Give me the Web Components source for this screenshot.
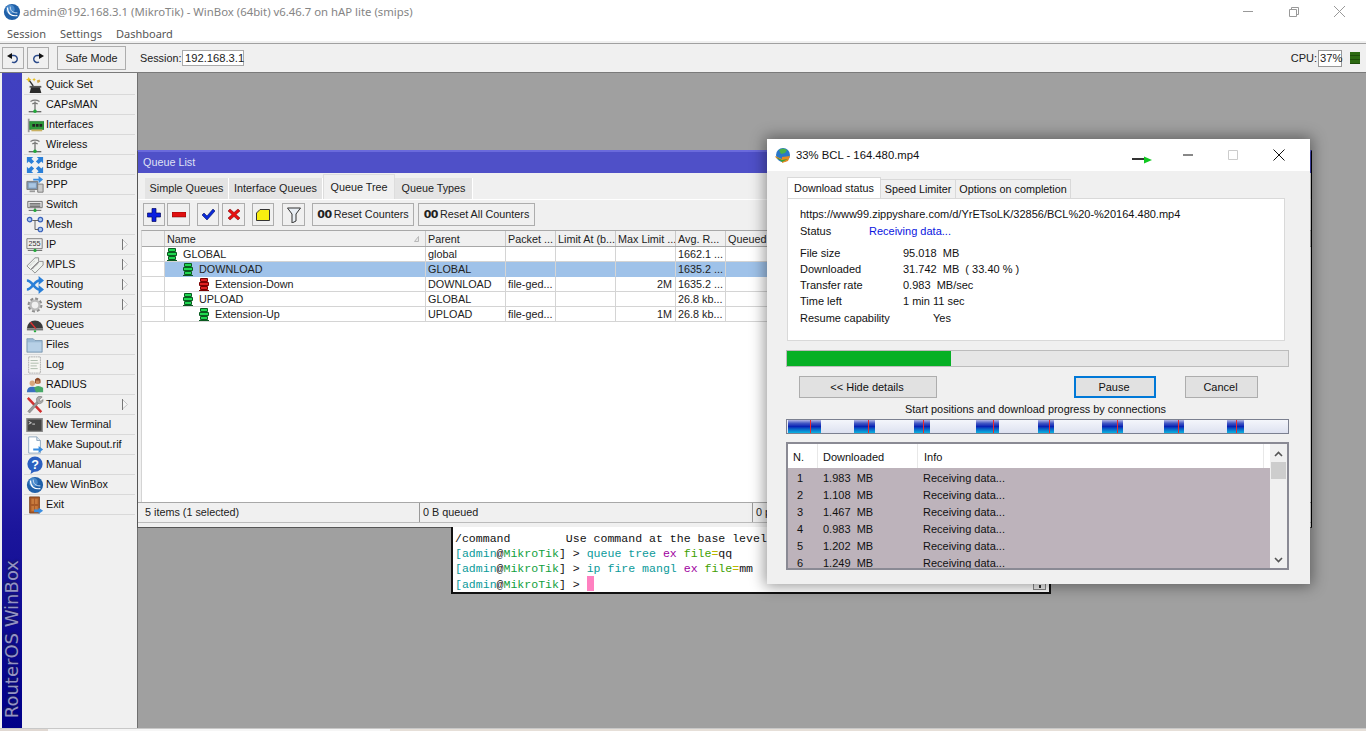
<!DOCTYPE html>
<html>
<head>
<meta charset="utf-8">
<title>WinBox</title>
<style>
    html, body { margin: 0; padding: 0; }
    body {
        width: 1366px;
        height: 731px;
        overflow: hidden;
        display: flex;
        flex-direction: column;
        background: #fff;
        color: #111;
        font: 10.8px/15px "Liberation Sans", Arial, sans-serif;
    }
</style>
</head>
<body>
<wb-titlebar></wb-titlebar>
<wb-menubar></wb-menubar>
<wb-toolbar></wb-toolbar>
<wb-workspace>
    <wb-sidebar></wb-sidebar>
    <wb-desktop>
        <wb-queue-window></wb-queue-window>
        <wb-terminal></wb-terminal>
        <idm-window></idm-window>
    </wb-desktop>
</wb-workspace>
<wb-taskstrip></wb-taskstrip>

<script>
// little base class: every element clones its markup from a template
class Shadowed extends HTMLElement {
    constructor() {
        super();
        this.root = this.attachShadow({mode: "open"});
        const tpl = document.createElement("template");
        tpl.innerHTML = "<style>" + this.constructor.css + "</style>" + this.constructor.html;
        this.root.appendChild(tpl.content.cloneNode(true));
    }
}
Shadowed.css = ":host{display:block}";
Shadowed.html = "<slot></slot>";

const svg = (w, h, body, box) =>
    `<svg width="${w}" height="${h}" viewBox="${box || `0 0 ${w} ${h}`}" style="display:block;flex:none">${body}</svg>`;

const ICONS = {
    quick: `<path d="M6 11h9l2 8H4z" fill="#2b2b2b"/><path d="M4 11h13v2H4z" fill="#555"/><path d="M8 11L3 4" stroke="#333" stroke-width="1.6"/><path d="M3 1l1 2 2 1-2 1-1 2-1-2-2-1 2-1zM9 2l.7 1.4L11 4l-1.3.6L9 6l-.7-1.4L7 4l1.3-.6z" fill="#e8c020"/><path d="M12 5l3-1 1 2-3 2z" fill="#c9a24a"/>`,
    antenna: `<path d="M5 6q5-3 10 0M7 9q3-2 6 0" fill="none" stroke="#777" stroke-width="1.3"/><path d="M10 6v10" stroke="#777" stroke-width="1.5"/><path d="M3 17.5h14" stroke="#444" stroke-width="1.2"/><circle cx="10" cy="17" r="2" fill="#22a83a"/>`,
    iface: `<path d="M2 3h2v15H2z" fill="#999"/><path d="M4 6h16v9H4z" fill="#2f9a3c" stroke="#1c6a28" stroke-width=".6"/><path d="M7 9h3v3H7zM11 9h3v3h-3zM15 9h3v3h-3z" fill="#222"/><path d="M6 15h12v2H6z" fill="#c9b060"/>`,
    bridge: `<g fill="#2a7fd8"><path d="M1 1h7L6 3l3 3-3 3-3-3-2 2zM19 1v7l-2-2-3 3-3-3 3-3-2-2zM1 19v-7l2 2 3-3 3 3-3 3 2 2zM19 19h-7l2-2-3-3 3-3 3 3 2-2z"/></g>`,
    ppp: `<path d="M1 6h12v9H1z" fill="#7d97b4" stroke="#777"/><path d="M3 8h8v5H3z" fill="#a9c6e3"/><path d="M4 16h6v2H4z" fill="#999"/><path d="M13 9h6v9h-6z" fill="#ccc" stroke="#777"/><path d="M8 3h6V0l5 4-5 4V5H8z" fill="#3a8de0"/>`,
    swtch: `<path d="M2 6h16v7H2z" fill="#e6e6e6" stroke="#666"/><path d="M4 8h12v1.5H4zM4 10.5h12V12H4z" fill="#555"/><path d="M3 16h14" stroke="#555"/><path d="M10 13v3" stroke="#555"/><circle cx="10" cy="16" r="1.8" fill="#22a83a"/>`,
    mesh: `<g fill="#a8c8f0" stroke="#3a60b8" stroke-width="1.3"><circle cx="4" cy="4" r="2.5"/><circle cx="16" cy="4" r="2.5"/><circle cx="16" cy="15" r="2.5"/></g><path d="M7 5h7M10 5v10h4" fill="none" stroke="#555"/>`,
    ip: `<path d="M1 3h17v11H1z" fill="#eee" stroke="#777"/><text x="9.5" y="11.5" text-anchor="middle" font-family="Liberation Sans" font-size="8" fill="#333">255</text><path d="M2 16h16" stroke="#555"/><circle cx="10" cy="16" r="1.8" fill="#22a83a"/>`,
    mpls: `<g fill="#eef2ee" stroke="#888"><path d="M1 11l9-9h4v4l-9 9z"/><path d="M6 15l9-9h4v4l-9 9z"/></g><path d="M4 11l6-6M8 14l6-6" stroke="#aaa" stroke-dasharray="1 1"/>`,
    routing: `<g fill="none" stroke="#2a7fd8" stroke-width="3"><path d="M1 5c6 0 8 10 14 10"/><path d="M1 15c6 0 8-10 14-10"/></g><path d="M14 0l6 5-6 5zM14 10l6 5-6 5z" fill="#2a7fd8"/>`,
    system: `<circle cx="10" cy="10" r="6.5" fill="none" stroke="#8e8e8e" stroke-width="3.5" stroke-dasharray="3 2"/><circle cx="10" cy="10" r="5" fill="none" stroke="#bbb" stroke-width="2.5"/>`,
    queues: `<path d="M1 14a9 9 0 0 1 18 0z" fill="#3a3a3a"/><path d="M1 14h18v2H1z" fill="#777"/><path d="M5 7l6 7" stroke="#e03030" stroke-width="1.5"/><path d="M10 16v2" stroke="#22a83a" stroke-width="2.5"/>`,
    files: `<path d="M1 5V3h7l2 2h8v13H1z" fill="#9cbad4" stroke="#6f8ea8" stroke-width=".8"/><path d="M2 7h15v10H2z" fill="#b7d0e6"/>`,
    log: `<path d="M3 1h13v18H3z" fill="#f6f6f2" stroke="#aaa" stroke-dasharray="2 .6"/><path d="M5 5h8M5 8h9M5 11h7M5 14h8" stroke="#a8b8a8"/>`,
    radius: `<circle cx="7" cy="8" r="3" fill="#d9a77e"/><path d="M1 18q0-6 6-6t6 6z" fill="#3a70c0"/><circle cx="13" cy="6" r="3" fill="#c8885a"/><path d="M10 4q3-4 6 0v4h-1V5h-4v3h-1z" fill="#8a4a28"/><path d="M9 13q4-4 10 0v5H11z" fill="#48a868"/>`,
    tools: `<path d="M3 1l15 16-2 2L1 3z" fill="#d03030"/><path d="M2 17L13 5l2 2L4 19z" fill="#999" stroke="#666" stroke-width=".5"/><path d="M12 6a4 4 0 0 1 6-5l-3 3 1 2 3-2a4 4 0 0 1-6 4z" fill="#aaa" stroke="#666" stroke-width=".5"/>`,
    terminal: `<path d="M1 3h17v14H1z" fill="#444" stroke="#888" stroke-width="1.5"/><path d="M3 6l3 1.5L3 9" fill="none" stroke="#ddd"/><path d="M7 9h3" stroke="#ddd"/>`,
    supout: `<path d="M3 1h9l4 4v14H3z" fill="#fff" stroke="#8aa4bc"/><path d="M12 1v4h4" fill="#dce6f0" stroke="#8aa4bc"/><path d="M8 14h6v-3l5 4-5 4v-3H8z" fill="#3a8de0"/>`,
    manual: `<circle cx="10" cy="9" r="8.5" fill="#2b5fc0"/><path d="M6 16l-1 4 5-3z" fill="#2b5fc0"/><text x="10" y="14" text-anchor="middle" font-family="Liberation Sans" font-weight="bold" font-size="14" fill="#fff">?</text>`,
    winbox: `<circle cx="10" cy="10" r="9" fill="#2060a8"/><circle cx="8" cy="7" r="5" fill="#5a9ad8" opacity=".7"/><path d="M5 5c0 7 4 10 11 9" fill="none" stroke="#fff" stroke-width="1.3"/><path d="M8 4c0 5 3 7 8 7" fill="none" stroke="#dbe8f6"/>`,
    exit: `<path d="M4 1h11v18H4z" fill="#a85a28" stroke="#6e3814" stroke-width=".8"/><path d="M6 3h3v6H6zM10 3h3v6h-3zM6 11h3v6H6zM10 11h3v6h-3z" fill="#c87a3c"/><path d="M9 15h5v-2l5 3.5-5 3.5v-2H9z" fill="#3a8de0"/>`,
};

class WbTitlebar extends Shadowed {}
WbTitlebar.css = `
    :host { display: flex; align-items: center; height: 23px; flex: none; background: #fff; padding-left: 3px; }
    span { margin-left: 2px; font: 11.35px "Noto Sans", sans-serif; color: #858585; white-space: nowrap; }
    .ctl { margin-left: auto; display: flex; gap: 30px; padding-right: 18px; align-items: center; }
`;
WbTitlebar.html = svg(18, 18, ICONS.winbox, "0 0 20 20") +
    `<span>admin@192.168.3.1 (MikroTik) - WinBox (64bit) v6.46.7 on hAP lite (smips)</span>
    <div class="ctl">` +
    svg(16, 12, `<path d="M3 5.5h10" stroke="#999"/>`) +
    svg(16, 12, `<path d="M3.5 3.5h7v7h-7zM5.5 3.5v-2h7v7h-2" fill="none" stroke="#999"/>`) +
    svg(16, 12, `<path d="M2 0l11 11M13 0L2 11" stroke="#999"/>`) + `</div>`;
customElements.define("wb-titlebar", WbTitlebar);

class WbMenubar extends Shadowed {}
WbMenubar.css = `
    :host { display: flex; flex: none; height: 16px; padding: 2px 0 0 7px; background: #fff; border-bottom: 2px solid #f0f0f0; gap: 14px; align-items: center; font: 11px "Noto Sans", sans-serif; color: #555; }
`;
WbMenubar.html = `<span>Session</span><span>Settings</span><span>Dashboard</span>`;
customElements.define("wb-menubar", WbMenubar);

class WbButton extends Shadowed {}
WbButton.css = `
    :host { display: inline-flex; align-items: center; justify-content: center; gap: 2px; box-sizing: border-box; border: 1.5px solid #adadad; background: #f0f0f0; color: #222; white-space: nowrap; flex: none; }
`;
customElements.define("wb-button", WbButton);

class WbToolbar extends Shadowed {
    connectedCallback() {
        this.root.getElementById("undo").innerHTML = svg(14, 12, `<path d="M4 3.5h4a3.5 3.5 0 1 1-2 6.5" fill="none" stroke="#2a4a8a" stroke-width="1.4"/><path d="M1 4l5-3v6z" fill="#111"/>`);
        this.root.getElementById("redo").innerHTML = svg(14, 12, `<path d="M10 3.5H6a3.5 3.5 0 1 0 2 6.5" fill="none" stroke="#2a4a8a" stroke-width="1.4"/><path d="M13 4L8 1v6z" fill="#111"/>`);
    }
}
WbToolbar.css = `
    :host { display: flex; flex: none; align-items: center; height: 28px; border-top: 1px solid #a0a0a0; border-bottom: 1px solid #7a7a7a; background: #f0f0f0; padding: 0 6px 0 2px; color: #222; }
    wb-button { height: 22px; }
    #undo, #redo { width: 22px; }
    #redo { margin-left: 3px; }
    #safe { width: 69px; height: 24px; margin-left: 8px; }
    .l { margin-left: 14px; width: 42px; white-space: nowrap; }
    .field { border: 1px solid #aaa; background: #fff; height: 16px; line-height: 15px; box-sizing: border-box; padding: 0 2px; font-size: 11.2px; }
    .cpu { margin-left: auto; font-size: 11px; }
    .cpuf { margin-left: 1px; width: 24px; height: 17px; border: 1px solid #999; padding: 0 1px; }
    .led { width: 10px; height: 12px; margin-left: 8px; background: repeating-linear-gradient(#2d6a12 0 3px, #1e4d0a 3px 4px); }
`;
WbToolbar.html = `<wb-button id="undo"></wb-button><wb-button id="redo"></wb-button>
    <wb-button id="safe">Safe Mode</wb-button>
    <span class="l">Session:</span><span class="field" style="width:62px">192.168.3.1</span>
    <span class="cpu">CPU:</span><span class="field cpuf">37%</span><span class="led"></span>`;
customElements.define("wb-toolbar", WbToolbar);

class WbWorkspace extends Shadowed {}
WbWorkspace.css = `:host { display: flex; flex: 1; min-height: 0; background: #f0f0f0; }`;
customElements.define("wb-workspace", WbWorkspace);

class WbMenuItem extends Shadowed {
    connectedCallback() {
        this.root.getElementById("icon").innerHTML = svg(18, 18, ICONS[this.getAttribute("icon")], "0 0 20 20");
        if (this.hasAttribute("sub")) {
            this.root.getElementById("arrow").innerHTML = svg(6, 11, `<path d="M.5 .5l5 5-5 4.5z" fill="#f6f6f6" stroke="#c4c4c4"/><path d="M.5 0v11" stroke="#777"/>`);
        }
    }
}
WbMenuItem.css = `
    :host { display: flex; align-items: center; height: 19px; border-bottom: 1px solid #d9d9d9; color: #111; white-space: nowrap; }
    #icon { width: 20px; margin-left: 2px; flex: none; }
    #arrow { margin-left: auto; margin-right: 7px; }
`;
WbMenuItem.html = `<div id="icon"></div><slot></slot><div id="arrow"></div>`;
customElements.define("wb-menu-item", WbMenuItem);

const MENU = [
    ["quick", "Quick Set"], ["antenna", "CAPsMAN"], ["iface", "Interfaces"], ["antenna", "Wireless"],
    ["bridge", "Bridge"], ["ppp", "PPP"], ["swtch", "Switch"], ["mesh", "Mesh"], ["ip", "IP", 1],
    ["mpls", "MPLS", 1], ["routing", "Routing", 1], ["system", "System", 1], ["queues", "Queues"],
    ["files", "Files"], ["log", "Log"], ["radius", "RADIUS"], ["tools", "Tools", 1],
    ["terminal", "New Terminal"], ["supout", "Make Supout.rif"], ["manual", "Manual"],
    ["winbox", "New WinBox"], ["exit", "Exit"],
];

class WbSidebar extends Shadowed {
    connectedCallback() {
        const list = this.root.getElementById("list");
        for (const [icon, label, sub] of MENU) {
            const item = document.createElement("wb-menu-item");
            item.setAttribute("icon", icon);
            if (sub) item.setAttribute("sub", "");
            item.textContent = label;
            list.appendChild(item);
        }
    }
}
WbSidebar.css = `
    :host { display: flex; width: 137px; flex: none; padding-left: 2px; box-sizing: border-box; background: #f0f0f0; }
    #strip { width: 20px; flex: none; background: linear-gradient(#4040c0 0%, #3f36bb 45%, #1b159b 70%, #000088 100%); display: flex; align-items: flex-end; justify-content: center; padding-bottom: 10px; box-sizing: border-box; }
    #strip span { writing-mode: vertical-rl; transform: rotate(180deg); font: 18px/20px "DejaVu Sans", sans-serif; color: #9494c2; text-shadow: 1px -1px 2px #1a1a50; white-space: nowrap; }
    #list { flex: 1; padding: 2px 2px 0 2px; min-width: 0; }
`;
WbSidebar.html = `<div id="strip"><span>RouterOS WinBox</span></div><div id="list"></div>`;
customElements.define("wb-sidebar", WbSidebar);

class WbDesktop extends Shadowed {}
WbDesktop.css = `:host { display: block; position: relative; flex: 1; background: #a0a0a0; box-shadow: inset 1px 0 0 #6f6f6f; overflow: hidden; }`;
customElements.define("wb-desktop", WbDesktop);

class WbTaskstrip extends Shadowed {}
WbTaskstrip.css = `:host { display: block; flex: none; height: 3px; border-top: 1px solid #c8c8c8; box-sizing: border-box; background: linear-gradient(90deg, #e0d8d2 48px, #f6f6f6 48px 390px, #e6dfd8 390px); }`;
customElements.define("wb-taskstrip", WbTaskstrip);

/* queue list window */
class WbQueueRow extends Shadowed {
    connectedCallback() {
        const cells = (this.getAttribute("cells") || "").split("|");
        const depth = +this.getAttribute("depth");
        const color = this.getAttribute("color") === "red"
            ? ["#e02020", "#7a0000"] : ["#20d850", "#0a5a20"];
        const lamp = svg(12, 13, `<g fill="${color[0]}" stroke="${color[1]}"><path d="M2.5 .5h7v3h-7zM1.5 4.5h9v3h-9zM2.5 8.5h7v3h-7z"/></g><path d="M1 12.5h10" stroke="${color[1]}"/>`);
        let html = `<div class="c first"></div>
            <div class="c name" style="padding-left:${1 + depth * 16}px">${lamp}<span>${cells[0]}</span></div>`;
        for (let i = 1; i < cells.length; i++) {
            const right = cells[i].endsWith("M") ? " r" : "";
            html += `<div class="c${right}">${cells[i]}</div>`;
        }
        this.root.getElementById("row").innerHTML = html;
        if (this.hasAttribute("selected")) this.root.getElementById("row").classList.add("sel");
    }
}
WbQueueRow.css = `
    :host { display: block; }
    #row { display: grid; grid-template-columns: var(--cols); height: 15px; background: #fff; }
    .c { box-sizing: border-box; border-right: 1px solid #d4d4d4; border-bottom: 1px solid #d4d4d4; padding-left: 2px; line-height: 14px; white-space: nowrap; overflow: hidden; }
    .r { text-align: right; padding-right: 3px; }
    .name { display: flex; align-items: center; gap: 5px; }
    .sel .c { background: #9fc2e9; border-bottom-color: #9fc2e9; }
    .sel .first { background: #fff; border-bottom-color: #d4d4d4; }
`;
WbQueueRow.html = `<div id="row"></div>`;
customElements.define("wb-queue-row", WbQueueRow);

const ROWS = [
    ["GLOBAL|global||||1662.1 ...|", 0],
    ["DOWNLOAD|GLOBAL||||1635.2 ...|", 1, "", true],
    ["Extension-Down|DOWNLOAD|file-ged...||2M|1635.2 ...|", 2, "red"],
    ["UPLOAD|GLOBAL||||26.8 kb...|", 1],
    ["Extension-Up|UPLOAD|file-ged...||1M|26.8 kb...|", 2],
];

class WbQueueWindow extends Shadowed {
    connectedCallback() {
        const tools = this.root.getElementById("tools");
        const btns = [
            [22, svg(14, 14, `<path d="M5 .5h4V5h4.5v4H9v4.5H5V9H.5V5H5z" fill="#0a1ee0" stroke="#050a60" stroke-width=".7"/>`), 0],
            [23, svg(14, 6, `<path d="M0 0h14v5H0z" fill="#e01010" stroke="#600" stroke-width=".5"/>`), 2],
            [22, svg(14, 13, `<path d="M1 7l2-2 3 3 6-7 2 2-8 9z" fill="#0a2ad8" stroke="#051060" stroke-width=".6"/>`), 7],
            [23, svg(14, 13, `<path d="M1 3l2-2 4 3.5L11 1l2 2-4 3.5L13 10l-2 2-4-3.5L3 12l-2-2 4-3.5z" fill="#e81010" stroke="#600" stroke-width=".5"/>`), 3],
            [22, svg(14, 12, `<path d="M.5 4L4 .5h9.5v11H.5z" fill="#f8ee10" stroke="#333"/>`), 7],
            [23, svg(14, 16, `<path d="M.5 1h13L9 7v7l-4 2V7z" fill="#e8eef4" stroke="#333"/>`), 8],
        ];
        btns.forEach(([w, icon, gap]) => {
            const b = document.createElement("wb-button");
            b.style.width = w + "px";
            b.style.marginLeft = gap + "px";
            b.innerHTML = icon;
            tools.appendChild(b);
        });
        for (const [text, w, gap] of [["Reset Counters", 102, 7], ["Reset All Counters", 117, 4]]) {
            const b = document.createElement("wb-button");
            b.style.width = w + "px";
            b.style.marginLeft = gap + "px";
            b.innerHTML = `<b style="font:bold 11px 'DejaVu Sans',sans-serif;letter-spacing:-.5px">00</b>${text}`;
            tools.appendChild(b);
        }
        const rows = this.root.getElementById("rows");
        for (const [cells, depth, color, sel] of ROWS) {
            const r = document.createElement("wb-queue-row");
            r.setAttribute("cells", cells);
            r.setAttribute("depth", depth);
            if (color) r.setAttribute("color", color);
            if (sel) r.setAttribute("selected", "");
            rows.appendChild(r);
        }
    }
}
WbQueueWindow.css = `
    :host { --cols: 23px 261px 80px 50px 60px 60px 50px 60px 1fr; display: flex; position: absolute; left: 0; top: 77px; width: 1175px; height: 378px; box-sizing: border-box; flex-direction: column; background: #f0f0f0; border: 1px solid #555; border-top: 1px solid #6a6adc; border-right-color: #000; color: #222; }
    #title { height: 21px; flex: none; background: #4f50c8; color: #dfe0f4; padding-left: 5px; line-height: 20px; border-top: 1px solid #6a6adc; }
    #tabs { display: flex; align-items: flex-end; height: 26px; flex: none; padding-left: 7px; border-bottom: 1px solid #fff; }
    .tab { height: 21px; line-height: 21px; background: #e4e4e4; border-right: 1px solid #fff; box-sizing: border-box; text-align: center; white-space: nowrap; }
    .tab.on { background: #f0f0f0; height: 25px; line-height: 25px; border: 1px solid #ddd; border-bottom: 0; }
    #tools { display: flex; height: 23px; flex: none; margin-top: 3px; padding-left: 5px; }
    #table { flex: 1; margin: 4px 0 0 3px; min-height: 0; display: flex; flex-direction: column; background: #fff; border-top: 1px solid #a8a8a8; border-left: 1px solid #d4d4d4; }
    #head { display: grid; grid-template-columns: var(--cols); height: 16px; box-sizing: border-box; flex: none; background: #f0f0f0; border-bottom: 1px solid #a8a8a8; line-height: 16px; }
    #head div { border-right: 1px solid #c8c8c8; padding-left: 2px; white-space: nowrap; overflow: hidden; }
    #head .n { display: flex; align-items: center; justify-content: space-between; padding-right: 5px; }
    #status { display: flex; height: 19px; flex: none; border-top: 1px solid #a8a8a8; border-bottom: 1px solid #bbb; margin: 0 0 4px 0; line-height: 19px; padding-left: 7px; }
    #status span { border-right: 1px solid #999; box-sizing: border-box; white-space: nowrap; }
`;
WbQueueWindow.html = `
    <div id="title">Queue List</div>
    <div id="tabs">
        <div class="tab" style="width:84px">Simple Queues</div><div class="tab" style="width:94px">Interface Queues</div><div class="tab on" style="width:72px">Queue Tree</div><div class="tab" style="width:78px">Queue Types</div>
    </div>
    <div id="tools"></div>
    <div id="table">
        <div id="head"><div></div><div class="n">Name${svg(6, 6, `<path d="M.5 5.5L4.5 .5v5z" fill="#e8e8e8" stroke="#b8b8b8"/>`)}</div><div>Parent</div><div>Packet ...</div><div>Limit At (b...</div><div>Max Limit ...</div><div>Avg. R...</div><div>Queued</div><div></div></div>
        <div id="rows"></div>
        <div style="flex:1"></div>
    </div>
    <div id="status"><span style="width:275px">5 items (1 selected)</span><span style="width:333px;padding-left:3px">0 B queued</span><span style="padding-left:3px;border:0;width:20px">0 p</span></div>
`;
customElements.define("wb-queue-window", WbQueueWindow);

/* terminal */
class WbTerminal extends Shadowed {}
WbTerminal.css = `
    :host { display: block; position: absolute; left: 314px; top: 454px; width: 600px; height: 67px; box-sizing: border-box; background: #fff; border: 2px solid #111; border-top: 0; padding: 4px 0 0 2px; font: 11.56px/15px "Liberation Mono", monospace; color: #111; }
    .ln { white-space: pre; height: 15px; }
    .t { color: #0a9a9a; } .g { color: #10a040; } .p { color: #a000a0; } .f { color: #40a000; } .y { color: #b8b800; }
    .cur { display: inline-block; width: 7px; height: 15px; background: #ff80c0; vertical-align: -3px; }
    .sb { position: absolute; right: 3px; bottom: 2px; width: 13px; height: 11px; background: #f0f0f0; border: 1px solid #888; box-sizing: border-box; display: flex; align-items: flex-end; justify-content: center; }
    .sb i { width: 2px; height: 3px; background: #333; margin-bottom: 1px; }
`;
WbTerminal.html = `<div class="ln">/command        Use command at the base level</div><div class="ln"><span class="t">[admin</span>@<span class="g">MikroTik</span>] &gt; <span class="t">queue tree</span> <span class="p">ex</span> <span class="f">file</span><span class="y">=</span>qq</div><div class="ln"><span class="t">[admin</span>@<span class="g">MikroTik</span>] &gt; <span class="t">ip fire mangl</span> <span class="p">ex</span> <span class="f">file</span><span class="y">=</span>mm</div><div class="ln"><span class="t">[admin</span>@<span class="g">MikroTik</span>] &gt; <span class="cur"></span></div><div class="sb"><i></i></div>`;
customElements.define("wb-terminal", WbTerminal);

/* download manager window */
class IdmButton extends Shadowed {}
IdmButton.css = `
    :host { display: flex; align-items: center; justify-content: center; height: 22px; box-sizing: border-box; background: #e1e1e1; border: 1px solid #adadad; color: #111; padding-right: 2px; }
    :host([focused]) { border: 2px solid #0078d7; }
`;
customElements.define("idm-button", IdmButton);

// start, end, red mark of the connection segments, in px from the bar's left edge
const SEGMENTS = [[1, 34, 23], [67, 88, 81], [127, 143, 136], [189, 212, 206], [251, 267, 262], [315, 336, 330], [377, 397, 391], [440, 457, 449]];

class IdmConnBar extends Shadowed {
    connectedCallback() {
        let html = "", last = 0;
        for (const [a, b, mark] of SEGMENTS) {
            html += `<i style="margin-left:${a - last}px;width:${b - a}px"><u style="margin-left:${mark - a}px"></u></i>`;
            last = b;
        }
        this.root.getElementById("bar").innerHTML = html;
    }
}
IdmConnBar.css = `
    :host { display: block; height: 15px; box-sizing: border-box; border: 1px solid #7b8090; background: linear-gradient(#f4f6fb, #dde1f0); }
    #bar { display: flex; height: 100%; }
    i { display: block; flex: none; height: 100%; background: linear-gradient(#b4b6e6 0, #4458c4 25%, #0a22b4 50%, #0a64c8 70%, #0ab4e0 100%); }
    u { display: block; width: 1px; height: 100%; background: #f02828; }
`;
IdmConnBar.html = `<div id="bar"></div>`;
customElements.define("idm-conn-bar", IdmConnBar);

const CONNS = [["1", "1.983  MB"], ["2", "1.108  MB"], ["3", "1.467  MB"], ["4", "0.983  MB"], ["5", "1.202  MB"], ["6", "1.249  MB"]];

class IdmConnList extends Shadowed {
    connectedCallback() {
        this.root.getElementById("rows").innerHTML = CONNS.map(([n, mb]) =>
            `<div class="row"><span class="n">${n}</span><span class="d">${mb}</span><span>Receiving data...</span></div>`).join("");
    }
}
IdmConnList.css = `
    :host { display: flex; height: 128px; box-sizing: border-box; border: 2px solid #8a8a94; background: #fff; overflow: hidden; }
    #main { flex: 1; min-width: 0; display: flex; flex-direction: column; }
    #head { display: flex; height: 24px; flex: none; line-height: 26px; }
    #head span { box-sizing: border-box; border-right: 1px solid #e8e8e8; padding-left: 5px; }
    #rows { flex: 1; background: #bdb3bb; overflow: hidden; padding-top: 2px; }
    .row { display: flex; height: 17px; line-height: 17px; white-space: pre; }
    .n { width: 30px; padding-left: 9px; box-sizing: border-box; }
    .d { width: 105px; padding-left: 5px; box-sizing: border-box; }
    #sb { width: 17px; flex: none; background: #f0f0f0; display: flex; flex-direction: column; align-items: center; }
    .arrow { height: 17px; display: flex; align-items: center; justify-content: center; flex: none; }
    .thumb { width: 15px; height: 17px; background: #cdcdcd; flex: none; }
`;
IdmConnList.html = `
    <div id="main">
        <div id="head"><span style="width:30px">N.</span><span style="width:100px">Downloaded</span><span style="width:346px;padding-left:6px">Info</span></div>
        <div id="rows"></div>
    </div>
    <div id="sb">
        <div class="arrow" style="margin-top:1px">${svg(9, 6, `<path d="M1 5l3.5-3.5L8 5" fill="none" stroke="#555" stroke-width="1.6"/>`)}</div>
        <div class="thumb"></div>
        <div style="flex:1"></div>
        <div class="arrow">${svg(9, 6, `<path d="M1 1l3.5 3.5L8 1" fill="none" stroke="#555" stroke-width="1.6"/>`)}</div>
    </div>
`;
customElements.define("idm-conn-list", IdmConnList);

class IdmWindow extends Shadowed {}
IdmWindow.css = `
    :host { display: flex; position: absolute; left: 630px; top: 66px; width: 543px; height: 445px; box-sizing: border-box; z-index: 2; background: #f0f0f0; box-shadow: 0 0 14px 2px rgba(0,0,0,.42); flex-direction: column; color: #111; font-size: 11px; }
    #title { height: 32px; flex: none; background: #fff; display: flex; align-items: center; padding-left: 7px; gap: 5px; font-size: 11.3px; }
    #ctl { margin-left: auto; display: flex; align-items: center; }
    #tabs { display: flex; align-items: flex-end; height: 27px; padding-left: 20px; flex: none; font-size: 10.8px; }
    .tab { height: 19px; line-height: 18px; border: 1px solid #d9d9d9; border-bottom: 0; border-left: 0; box-sizing: border-box; text-align: center; white-space: nowrap; }
    .tab.on { height: 21px; background: #fff; border-left: 1px solid #d9d9d9; line-height: 20px; }
    #panel { height: 143px; flex: none; margin: 0 25px 0 20px; background: #fff; border: 1px solid #d9d9d9; box-sizing: border-box; padding: 7px 12px; }
    .line { height: 16px; line-height: 16px; white-space: pre; display: flex; }
    .line b { font-weight: normal; width: 103px; flex: none; }
    #bar { height: 17px; margin: 9px 21px 0 19px; flex: none; background: #e6e6e6; border: 1px solid #bcbcbc; box-sizing: border-box; }
    #bar i { display: block; height: 100%; width: 164px; background: #06b025; }
    #btns { display: flex; margin: 9px 52px 0 32px; flex: none; }
    #cap { text-align: center; height: 15px; line-height: 15px; margin: 4px 6px 2px 0; flex: none; font-size: 10.9px; }
    idm-conn-bar { margin: 0 21px 8px 19px; flex: none; }
    idm-conn-list { margin: 0 21px 0 19px; flex: none; }
`;
IdmWindow.html = `
    <div id="title">
        ${svg(17, 17, `<circle cx="9" cy="8" r="7" fill="#2a78c8"/><path d="M5 3q4-3 8 0l-2 3-4 1z" fill="#4ab04a"/><path d="M1 9l7 3v-2l8-1-2 5-6 2v-2l-6-3z" fill="#e88a20"/><path d="M2 10l6 3 6-1-6 3z" fill="#3aa03a"/>`)}
        <span>33% BCL - 164.480.mp4</span>
        <div id="ctl">
            <span style="padding-top:10px">${svg(20, 8, `<path d="M0 3h13" stroke="#333" stroke-width="2"/><path d="M12 .5L20 4l-8 3.5z" fill="#10c820"/>`)}</span>
            <span style="width:31px"></span>
            ${svg(10, 2, `<path d="M0 1h10" stroke="#111"/>`)}
            <span style="width:35px"></span>
            ${svg(10, 10, `<path d="M.5 .5h9v9h-9z" fill="none" stroke="#ccc"/>`)}
            <span style="width:35px"></span>
            ${svg(12, 12, `<path d="M.5 .5l11 11M11.5 .5l-11 11" stroke="#111"/>`)}
            <span style="width:25px"></span>
        </div>
    </div>
    <div id="tabs">
        <div class="tab on" style="width:94px">Download status</div><div class="tab" style="width:75px">Speed Limiter</div><div class="tab" style="width:115px">Options on completion</div>
    </div>
    <div id="panel">
        <div class="line" style="height:17px">https://www99.zippyshare.com/d/YrETsoLK/32856/BCL%20-%20164.480.mp4</div>
        <div class="line" style="height:22px"><b style="width:69px">Status</b><span style="color:#0a14e0">Receiving data...</span></div>
        <div class="line"><b>File size</b>95.018  MB</div>
        <div class="line"><b>Downloaded</b>31.742  MB  ( 33.40 % )</div>
        <div class="line"><b>Transfer rate</b>0.983  MB/sec</div>
        <div class="line"><b>Time left</b>1 min 11 sec</div>
        <div class="line" style="margin-top:1px"><b style="width:133px">Resume capability</b>Yes</div>
    </div>
    <div id="bar"><i></i></div>
    <div id="btns">
        <idm-button style="width:138px">&lt;&lt; Hide details</idm-button>
        <idm-button focused style="width:82px;margin-left:137px">Pause</idm-button>
        <idm-button style="width:73px;margin-left:29px">Cancel</idm-button>
    </div>
    <div id="cap">Start positions and download progress by connections</div>
    <idm-conn-bar></idm-conn-bar>
    <idm-conn-list></idm-conn-list>
`;
customElements.define("idm-window", IdmWindow);
</script>
</body>
</html>
